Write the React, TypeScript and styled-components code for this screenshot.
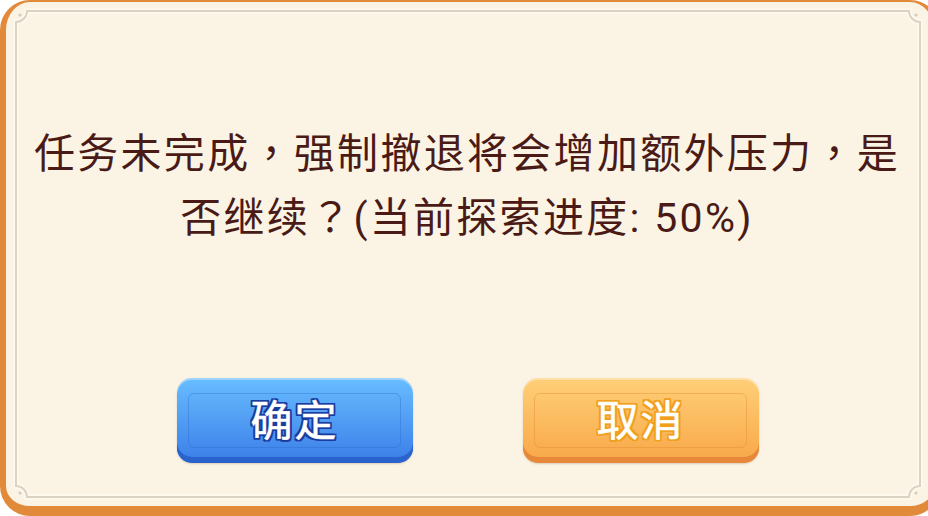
import React from 'react';
import styled, { createGlobalStyle, css } from 'styled-components';

const GlobalStyle = createGlobalStyle`
  html, body {
    margin: 0;
    padding: 0;
    background: #ffffff;
    overflow: hidden;
  }
  #root {
    width: 928px;
    height: 516px;
    overflow: hidden;
  }
`;

const Frame = styled.div`
  position: relative;
  box-sizing: border-box;
  width: 940px;
  height: 516px;
  background: #fbf4e5;
  border-style: solid;
  border-color: #e18a3a;
  border-width: 2px 6px 10px 6px;
  border-radius: 30px;
  display: flex;
  flex-direction: column;
  align-items: center;
  font-family: Roboto, 'Noto Sans CJK SC', sans-serif;
`;

const InnerLine = styled.svg`
  position: absolute;
  left: -6px;
  top: -2px;
  pointer-events: none;
`;

const Message = styled.div`
  margin-top: 118px;
  width: 100%;
  height: 120px;
  padding-right: 6px;
  box-sizing: border-box;
  text-align: center;
  color: #4a1b16;
  font-size: 41px;
  line-height: 60px;
  letter-spacing: 2.3px;
`;

// full-width punctuation sits centred in its cell in the reference
const Punct = styled.span`
  font-family: 'Noto Sans CJK TC', sans-serif;
`;

const ButtonRow = styled.div`
  margin-top: 138px;
  margin-right: 5px;
  display: flex;
  gap: 110px;
`;

type Tone = 'blue' | 'orange';

const tones = {
  blue: {
    top: '#68bdff',
    bottom: '#3a7de8',
    edge: '#2a63cc',
    inner: 'rgba(40, 100, 200, 0.35)',
    outline: '#1a3c9e',
  },
  orange: {
    top: '#ffcf78',
    bottom: '#f8a747',
    edge: '#e6873a',
    inner: 'rgba(220, 130, 40, 0.35)',
    outline: '#f0a01c',
  },
};

const outline = (c: string) => css`
  text-shadow:
    2px 0 0 ${c}, -2px 0 0 ${c}, 0 2px 0 ${c}, 0 -2px 0 ${c},
    2px 2px 0 ${c}, -2px 2px 0 ${c}, 2px -2px 0 ${c}, -2px -2px 0 ${c};
`;

const DialogButton = styled.button<{ $tone: Tone }>`
  position: relative;
  box-sizing: border-box;
  width: 236px;
  height: 85px;
  border: none;
  border-radius: 15px;
  padding: 0 0 6px 0;
  cursor: pointer;
  background: linear-gradient(
    ${(p) => tones[p.$tone].top},
    ${(p) => tones[p.$tone].bottom}
  );
  box-shadow:
    inset 0 -6px 0 ${(p) => tones[p.$tone].edge},
    inset 0 2px 0 rgba(255, 255, 255, 0.35),
    0 1px 2px rgba(120, 90, 60, 0.25);
  color: #ffffff;
  font-family: 'Noto Sans CJK SC', sans-serif;
  font-size: 42px;
  font-weight: 400;
  letter-spacing: 2px;
  -webkit-text-stroke: 0.6px #ffffff;
  ${(p) => outline(tones[p.$tone].outline)}

  &::before {
    content: '';
    position: absolute;
    left: 11px;
    right: 12px;
    top: 15px;
    bottom: 15px;
    border: 1.5px solid ${(p) => tones[p.$tone].inner};
    border-radius: 6px;
  }
`;

const notched = (x1: number, y1: number, x2: number, y2: number, r: number) =>
  [
    `M ${x1 + r} ${y1}`,
    `L ${x2 - r} ${y1}`,
    `A ${r} ${r} 0 0 0 ${x2} ${y1 + r}`,
    `L ${x2} ${y2 - r}`,
    `A ${r} ${r} 0 0 0 ${x2 - r} ${y2}`,
    `L ${x1 + r} ${y2}`,
    `A ${r} ${r} 0 0 0 ${x1} ${y2 - r}`,
    `L ${x1} ${y1 + r}`,
    `A ${r} ${r} 0 0 0 ${x1 + r} ${y1}`,
    'Z',
  ].join(' ');

const App: React.FC = () => {
  const x1 = 16;
  const y1 = 11;
  const x2 = 920;
  const y2 = 497;
  const r = 11;

  return (
    <>
      <GlobalStyle />
      <Frame>
        <InnerLine width={940} height={516}>
          <path
            d={notched(x1, y1, x2, y2, r)}
            fill="none"
            stroke="#fffaf0"
            strokeWidth={5}
          />
          <path
            d={notched(x1, y1, x2, y2, r)}
            fill="none"
            stroke="#dcd2c2"
            strokeWidth={2}
          />
          <circle cx={x1 + 4} cy={y1 + 4} r={1.6} fill="#d6ccbc" />
          <circle cx={x2 - 4} cy={y1 + 4} r={1.6} fill="#d6ccbc" />
          <circle cx={x1 + 4} cy={y2 - 4} r={1.6} fill="#d6ccbc" />
          <circle cx={x2 - 4} cy={y2 - 4} r={1.6} fill="#d6ccbc" />
        </InnerLine>
        <Message>
          任务未完成<Punct>，</Punct>强制撤退将会增加额外压力<Punct>，</Punct>是
          <br />
          否继续<Punct>？</Punct>(当前探索进度: 50%)
        </Message>
        <ButtonRow>
          <DialogButton $tone="blue">确定</DialogButton>
          <DialogButton $tone="orange">取消</DialogButton>
        </ButtonRow>
      </Frame>
    </>
  );
};

export default App;
